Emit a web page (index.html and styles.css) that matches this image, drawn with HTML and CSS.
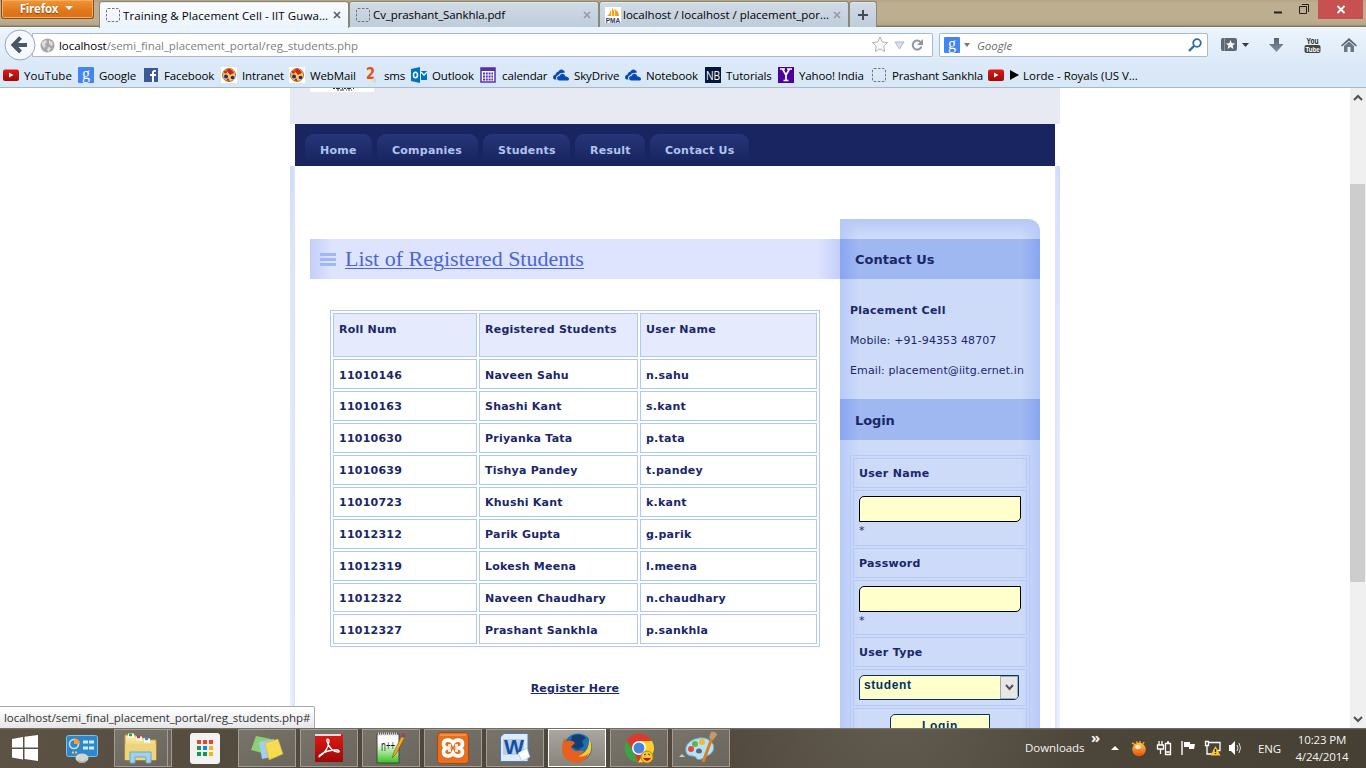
FILE: index.html
```html
<!DOCTYPE html>
<html lang="en">
<head>
<meta charset="utf-8">
<title>Training &amp; Placement Cell - IIT Guwahati</title>
<link rel="stylesheet" href="styles.css">
</head>
<body>
<svg class="defs" width="0" height="0">
  <defs>
    <linearGradient id="red" x2="0" y2="1"><stop stop-color="#e01a14"/><stop offset="1" stop-color="#9c0a08"/></linearGradient>
    <linearGradient id="steel" x2="0" y2="1"><stop stop-color="#57626e"/><stop offset="1" stop-color="#8592a0"/></linearGradient>
    <linearGradient id="fold" x2="0" y2="1"><stop stop-color="#fbeaa9"/><stop offset="1" stop-color="#e3bf55"/></linearGradient>
    <linearGradient id="npp" x2="0" y2="1"><stop offset=".3" stop-color="#fff"/><stop offset="1" stop-color="#38c41c"/></linearGradient>
    <linearGradient id="sun" x2="0" y2="1"><stop stop-color="#ffc94a"/><stop offset="1" stop-color="#e84c0a"/></linearGradient>
    <symbol id="yt" viewBox="0 0 16 16"><rect y="2.5" width="16" height="11.5" rx="2" fill="url(#red)"/><path d="M6 5.5v5l4.500-2.500z" fill="#fff"/></symbol>
    <symbol id="g" viewBox="0 0 16 16"><rect width="16" height="16" rx="1" fill="#4285f4"/><text x="8" y="11.500" text-anchor="middle" font-family="Liberation Serif, serif" font-size="16" fill="#fff">g</text></symbol>
    <symbol id="blank" viewBox="0 0 16 16"><rect x="1.500" y="1.500" width="13" height="13" rx="1.500" fill="none" stroke="#70767c" stroke-dasharray="2.500 1.500"/></symbol>
    <symbol id="iit" viewBox="0 0 16 16"><path fill="#fff" d="M0 0h16v16H0z"/><circle cx="8" cy="8" r="6.500" fill="#f3cf55" stroke="#a87530"/><path d="M5 3q5-3 8 3l-4 2z" fill="#d22219"/><circle cx="5" cy="9.500" r="2" fill="#21269b"/><circle cx="11.500" cy="10.500" r="1.800" fill="#21269b"/><circle cx="4.500" cy="5" r="1.500" fill="#d22219"/><path d="M7 11l2 3-4-.5z" fill="#d22219"/></symbol>
    <symbol id="cloud" viewBox="0 0 16 16"><path fill="#094ab2" d="M1.500 12.500Q0 12 0 10t2.500-2.500Q3 5 5.500 4.500 7 1.500 10 3q1.500.5 2 2.500L9 6Q7 5.500 5.500 8 3 8.500 3 11q0 1 .5 1.500z"/><path fill="#094ab2" d="M6 13.500q-2-.5-2-2.500t2.500-2Q8 6 10.500 7q1.500.5 2 2.500 3.500.5 3.500 2.500 0 1-1 1.500z"/></symbol>
  </defs>
</svg>
<div class="screen">
  <header class="chrome">
    <div class="titlebar">
      <button class="ffbtn">Firefox <i class="tri"></i></button>
      <div class="tabs">
        <div class="tab on"><svg class="i16"><use href="#blank"/></svg><span class="t1">Training &amp; Placement Cell - IIT Guwa...</span><svg class="x" width="8" height="8"><path d="M1 1l6 6m0-6l-6 6"/></svg></div>
        <div class="tab"><svg class="i16"><use href="#blank"/></svg><span class="t2">Cv_prashant_Sankhla.pdf</span><svg class="x" width="8" height="8"><path d="M1 1l6 6m0-6l-6 6"/></svg></div>
        <div class="tab"><svg class="i16" viewBox="0 0 16 16"><path fill="#fff" d="M0 0h16v16H0z"/><path d="M2 9Q6 6 6 1v8zM7 9V1q3 3 2 8zM10 9q1-4-1-7 5 2 5 7z" fill="#f89c0e"/><text x="8" y="15.500" text-anchor="middle" font-family="Liberation Sans, sans-serif" font-weight="bold" font-size="6.500" fill="#333366">PMA</text></svg><span class="t3">localhost / localhost / placement_por...</span><svg class="x" width="8" height="8"><path d="M1 1l6 6m0-6l-6 6"/></svg></div>
        <div class="tab plus"><svg width="12" height="12"><path d="M6 1v10M1 6h10" stroke="#444b52" stroke-width="2"/></svg></div>
      </div>
      <div class="wctl">
        <svg width="112" height="19"><path d="M16 12.500h8" stroke="#222" stroke-width="2"/><path d="M41.500 6.500h7v7h-7zM44 4.500h6.500V12" fill="none" stroke="#222"/><path fill="#c75050" d="M60 0h45v19H60z"/><path d="M79.500 6l7 7m0-7l-7 7" stroke="#fff" stroke-width="1.800"/></svg>
      </div>
    </div>
    <div class="toolbar">
      <div class="back"><svg width="32" height="32"><circle cx="16" cy="16" r="15" fill="#f5f9fd" stroke="#96a7b8"/><path d="M16.500 8.500L9.500 16l7 7M10 16h13" fill="none" stroke="#4a5663" stroke-width="4"/></svg></div>
      <div class="url">
        <svg class="globe" width="15" height="15" viewBox="0 0 15 15"><circle cx="7.500" cy="7.500" r="7" fill="#a7a7a7"/><path d="M2 4l4-2 1 2-2 2 1 2-2 2-2-3zM9 2l4 3-1 3-2-1-1-2zM8 9l3 1-2 4-2-2z" fill="#dedede"/></svg>
        <span class="addr">localhost<em>/semi_final_placement_portal/reg_students.php</em></span>
        <svg width="58" height="20" class="urlend"><path d="M9 2l2.300 5 5.200.600-3.800 3.600 1 5.300L9 13.900l-4.700 2.600 1-5.300L1.500 7.600 6.700 7z" fill="#fafafa" stroke="#adb1b5"/><path d="M24 7h9l-4.500 7z" fill="#d9e0e8" stroke="#a5afba" stroke-width=".8"/><path d="M49.500 7A4.500 4.500 0 1 0 50.500 11.500" fill="none" stroke="#8a98a6" stroke-width="2"/><path d="M52 4v6h-6z" fill="#8a98a6"/></svg>
      </div>
      <div class="search"><svg class="i16"><use href="#g"/></svg><i class="tri dk"></i><em class="sg">Google</em><svg width="14" height="14" class="mag"><circle cx="9" cy="5" r="3.800" fill="none" stroke="#2e6da8" stroke-width="1.800"/><path d="M6 8l-5 5" stroke="#2e6da8" stroke-width="2.400"/></svg></div>
      <div class="tools">
        <svg width="28" height="18"><rect y="2" width="16" height="13" rx="2" fill="#5d6874"/><path d="M3.500 2v13" stroke="#8d98a3"/><path d="M9.500 4l1.300 3.200 3.400.2-2.600 2.200.8 3.400-2.900-1.900-2.900 1.900.8-3.400-2.600-2.200 3.400-.2z" fill="#fff"/><path d="M21 7h7l-3.500 4z" fill="#333b43"/></svg>
        <svg width="15" height="18"><path d="M5 2h5v6h4.500l-7 8L0 8h5z" fill="url(#steel)"/></svg>
        <svg width="17" height="18"><text x="2.500" y="7.500" font-family="Liberation Sans, sans-serif" font-weight="bold" font-size="8.500" textLength="12" lengthAdjust="spacingAndGlyphs" fill="#222">You</text><rect x=".5" y="9" width="16" height="8" rx="2" fill="#444"/><text x="1.500" y="16" font-family="Liberation Sans, sans-serif" font-weight="bold" font-size="8" textLength="14" lengthAdjust="spacingAndGlyphs" fill="#fff">Tube</text></svg>
        <svg width="16" height="18"><path d="M0 9.500L8 2l8 7.500-1 1L8 4.500l-7 6z" fill="#55606c"/><path d="M3 10l5-4.500L13 10v6H9.500v-5h-3v5H3z" fill="#6c7884"/></svg>
      </div>
    </div>
    <nav class="marks">
      <a class="m1"><svg class="i16"><use href="#yt"/></svg><span>YouTube</span></a>
      <a class="m2"><svg class="i16"><use href="#g"/></svg><span>Google</span></a>
      <a class="m3"><svg class="i16 low" viewBox="0 0 16 16"><path fill="#3b5998" d="M0 1h14v14H0z"/><path d="M10 15V9h2V7h-2V5.500q0-1 2-.8V3Q8 2.500 8 5.500V7H6v2h2v6z" fill="#fff"/></svg><span>Facebook</span></a>
      <a class="m4"><svg class="i16"><use href="#iit"/></svg><span>Intranet</span></a>
      <a class="m5"><svg class="i16"><use href="#iit"/></svg><span>WebMail</span></a>
      <a class="m6"><svg class="i16" viewBox="0 0 16 16"><text x="1" y="12" font-family="DejaVu Sans, sans-serif" font-weight="bold" font-size="15" textLength="9" lengthAdjust="spacingAndGlyphs" fill="#e8500f">2</text><path d="M7 12q4-3 4 1t-3 2z" fill="#d5d8da"/></svg><span>sms</span></a>
      <a class="m7"><svg class="i16" viewBox="0 0 16 16"><path fill="#0072c6" d="M0 2l9-2v16l-9-2zM10 4h6v9h-6z"/><path d="M10 5l3 3 3-3" fill="none" stroke="#fff" stroke-width="1.300"/><ellipse cx="4.500" cy="8" rx="2" ry="2.800" fill="none" stroke="#fff" stroke-width="1.500"/></svg><span>Outlook</span></a>
      <a class="m8"><svg class="i16" viewBox="0 0 16 16"><path d="M1 1h14v14H1z" fill="#fff" stroke="#5133ab" stroke-width="1.500"/><path d="M1 1h14v3H1z" fill="#5133ab"/><path d="M3 6.500h10M3 9.500h10M3 12.500h10" stroke="#5133ab" stroke-width="2" stroke-dasharray="2 .8"/></svg><span>calendar</span></a>
      <a class="m9"><svg class="i16"><use href="#cloud"/></svg><span>SkyDrive</span></a>
      <a class="m10"><svg class="i16"><use href="#cloud"/></svg><span>Notebook</span></a>
      <a class="m11"><svg class="i16" viewBox="0 0 16 16"><path fill="#04173a" d="M0 0h16v16H0z"/><text x="1" y="12.500" font-family="Open Sans, sans-serif" font-size="12.500" textLength="14" lengthAdjust="spacingAndGlyphs" fill="#fff">NB</text></svg><span>Tutorials</span></a>
      <a class="m12"><svg class="i16" viewBox="0 0 16 16"><path fill="#4d00a0" d="M0 0h16v16H0z"/><path d="M2 2h5M9 2h5M4.500 2L8 8v5l0-5 3.500-6M5.500 13.500h5" fill="none" stroke="#fff" stroke-width="1.700"/></svg><span>Yahoo! India</span></a>
      <a class="m13"><svg class="i16"><use href="#blank"/></svg><span>Prashant Sankhla</span></a>
      <a class="m14"><svg class="i16"><use href="#yt"/></svg><i class="play"></i><span>Lorde - Royals (US V...</span></a>
    </nav>
  </header>

  <div class="view">
    <main class="page">
      <div class="top"><div class="logo"><svg width="30" height="3"><path d="M3 .5h22M7 2h15" stroke="#333" stroke-dasharray="2 1 4 2 1 1"/></svg></div></div>
      <nav class="menu"><a class="n1">Home</a><a class="n2">Companies</a><a class="n3">Students</a><a class="n4">Result</a><a class="n5">Contact Us</a></nav>
      <div class="body">
        <section class="content">
          <div class="heading"><i class="bars"></i><h1>List of Registered Students</h1></div>
          <div class="grid">
            <b>Roll Num</b><b>Registered Students</b><b>User Name</b>
            <span class="lo">11010146</span><span class="lo">Naveen Sahu</span><span class="lo">n.sahu</span>
            <span>11010163</span><span>Shashi Kant</span><span>s.kant</span>
            <span>11010630</span><span>Priyanka Tata</span><span>p.tata</span>
            <span>11010639</span><span>Tishya Pandey</span><span>t.pandey</span>
            <span>11010723</span><span>Khushi Kant</span><span>k.kant</span>
            <span>11012312</span><span>Parik Gupta</span><span>g.parik</span>
            <span>11012319</span><span>Lokesh Meena</span><span>l.meena</span>
            <span>11012322</span><span>Naveen Chaudhary</span><span>n.chaudhary</span>
            <span class="lo">11012327</span><span class="lo">Prashant Sankhla</span><span class="lo">p.sankhla</span>
          </div>
          <div class="reg"><a>Register Here</a></div>
        </section>
        <aside class="side">
          <h2>Contact Us</h2>
          <div class="contact"><p><b>Placement Cell</b></p><p>Mobile: +91-94353 48707</p><p>Email: placement@iitg.ernet.in</p></div>
          <h2 class="h41">Login</h2>
          <div class="form">
            <div class="lab">User Name</div>
            <div class="fld"><div class="inp"></div>*</div>
            <div class="lab">Password</div>
            <div class="fld"><div class="inp"></div>*</div>
            <div class="lab">User Type</div>
            <div class="selrow"><div class="sel"><span>student</span><i><svg width="9" height="7"><path d="M1 1l3.500 4L8 1" fill="none" stroke="#555" stroke-width="2"/></svg></i></div></div>
            <div class="btnrow"><div class="btn">Login</div></div>
          </div>
        </aside>
      </div>
    </main>
    <div class="scroll"><svg width="16" height="16"><path d="M4 10l4-4 4 4" fill="none" stroke="#505050" stroke-width="2"/></svg><div class="thumb"></div><svg width="16" height="16"><path d="M4 6l4 4 4-4" fill="none" stroke="#505050" stroke-width="2"/></svg></div>
    <div class="status"><span>localhost/semi_final_placement_portal/reg_students.php#</span></div>
  </div>

  <footer class="task">
    <div class="slot s1"><svg width="26" height="26"><path d="M0 4l11-2v10.500H0zM12.500 1.800L26 0v12.500H12.500zM0 14h11v10.500l-11-2zM12.500 14H26v12l-13.500-2z" fill="#fff"/></svg></div>
    <div class="slot s2"><svg width="32" height="32"><rect x=".5" y="3.500" width="31" height="21" rx="2" fill="#2f86ca" stroke="#7cc0ec"/><circle cx="8" cy="12" r="4.500" fill="none" stroke="#c9e8fb" stroke-width="1.600"/><path d="M8 12V6q6 1 6 6z" fill="#ff9b30"/><path d="M17 10h5m1 0h5M17 16h5m1 0h5" stroke="#cbeeff" stroke-width="3"/><path d="M6 20.500h6" stroke="#ffc34d" stroke-width="2" stroke-dasharray="2 1"/><ellipse cx="16" cy="26" rx="6.500" ry="4.500" fill="#d4d4d2"/><path d="M12 27q4 5 8 0l-1 4h-6z" fill="#aaa"/></svg></div>
    <div class="slot bt s3"><svg width="34" height="32"><path d="M1 3h10l2 3h8l2 2h9v20H1z" fill="url(#fold)" stroke="#c69c37"/><path d="M4 3.500h6M12 6.500h6M20 8.500h6" stroke="#fff" stroke-width="4"/><path d="M5 3h3" stroke="#1bb02a" stroke-width="2.500"/><path d="M13 5h3" stroke="#d3392a" stroke-width="2.500"/><path d="M21 7h3" stroke="#2590dd" stroke-width="2.500"/><path d="M1 12h31v16H1z" fill="#efd47b"/><path d="M6 31V20h21v11h-5v-6H11v6z" fill="#9fd3ed" stroke="#6ba7c7"/></svg></div><div class="stack"></div>
    <div class="slot s4"><svg width="30" height="31"><rect width="30" height="31" rx="3" fill="#f2f2f2"/><g><path d="M7 7h4v4H7zm6 0h4v4h-4zm6 0h4v4h-4z" fill="#ea4335"/><path d="M7 13h4v4H7zM7 19h4v4H7zM13 19h4v4h-4z" fill="#0b9d58"/><path d="M13 13h4v4h-4z" fill="#1a84ee"/><path d="M19 13h4v4h-4zm0 6h4v4h-4z" fill="#fbb409"/></g></svg></div>
    <div class="slot bt s5"><svg width="34" height="28"><path d="M6 2l15 3-5 15L1 16z" fill="#8dcf73"/><path d="M9 8l15-3 3 17-15 3z" fill="#a0cef5"/><path d="M15 9l13-4 5 15-14 6z" fill="#f5dc50" stroke="#d1ae2d" stroke-width=".5"/></svg></div>
    <div class="slot bt s6"><svg width="30" height="30"><rect x="1" y="1" width="28" height="28" rx="1" fill="url(#red)"/><path d="M1 1h26v2H1z" fill="#ddd"/><path d="M6 23q8-5 9-15c0-3-3-2-2 0 2 8 7 11 11 11 2 0 1-2-1-2q-11 0-17 5-2 3 0 1" fill="none" stroke="#fff" stroke-width="1.400"/></svg></div>
    <div class="slot bt s7"><svg width="32" height="32"><path d="M2 2h22v29H2z" fill="url(#npp)" stroke="#444"/><path d="M3 2h20" stroke="#ccc" stroke-width="3" stroke-dasharray="1 1"/><text x="6" y="19" font-family="Open Sans, sans-serif" font-size="14" textLength="14" lengthAdjust="spacingAndGlyphs" fill="#111">n++</text><path d="M17 26l2-6L27 3l3 2-9 17z" fill="#f0aa28" stroke="#754c10" stroke-width=".6"/><path d="M26 5l1.500-4 3 1.500L29 6z" fill="#9c4550"/></svg></div>
    <div class="slot bt s8"><svg width="32" height="32"><rect x=".5" y=".5" width="31" height="31" rx="3" fill="#e86f1e" stroke="#a9480e"/><path d="M3 3h26" stroke="#f5b183"/><path d="M14 13.500h-3M14 18.500h-3M18 13.500h3M18 18.500h3" stroke="#fff" stroke-width="2.500"/><path d="M16 11C14 7 6.500 7 6.500 12q0 3 3 4-3 1-3 4c0 5 7.500 5 9.500 1 2 4 9.500 4 9.500-1q0-3-3-4 3-1 3-4c0-5-7.500-5-9.500-1z" fill="none" stroke="#fff" stroke-width="3.600"/></svg></div>
    <div class="slot bt s9"><svg width="30" height="30"><path d="M4 .5h24v28H.5V4z" fill="#dfebf7" stroke="#487cbe"/><path d="M3 6h21v16H3z" fill="#b6cfeb"/><text x="4" y="21" font-family="Liberation Sans, sans-serif" font-weight="bold" font-size="21" textLength="20" lengthAdjust="spacingAndGlyphs" fill="#164e9e">W</text><path d="M18 20l9-5 3 9-8 4z" fill="#fff" stroke="#9bb7d9" stroke-width=".6"/></svg></div>
    <div class="slot bt act s10"><svg width="32" height="32"><circle cx="17" cy="15.500" r="14" fill="#1c6fb2"/><path d="M11 4q8-4 14 2l-4 3 2 5-6 4-8-4z" fill="#123e78"/><path d="M28 6q6 12-3 20T6 27L20 23q9-5 8-17z" fill="#ffc829"/><path d="M4 5q0 5 3 4 5-1 7 2l-4 4q2 5 8 4 3-1 5 0-3 6-9 4 8 4 14-2-4 10-13 10Q1 29 1 16 1 10 4 5z" fill="#e8601b"/></svg></div>
    <div class="slot bt s11"><svg width="30" height="32"><circle cx="15" cy="16" r="14.500" fill="#dc3a2d"/><path d="M2.500 8.500L10 20l4 10.500A14.500 14.500 0 0 1 2.500 8.500z" fill="#3ba347"/><path d="M15 9h13a14.500 14.500 0 0 1-14 21.500l8-13z" fill="#fdd32a"/><circle cx="15" cy="16" r="7" fill="#fff"/><circle cx="15" cy="16" r="5.500" fill="#4587d6"/><circle cx="23" cy="25" r="6" fill="#f5c52c" stroke="#bc850f"/><path d="M19 26h8q-4 6-8 0" fill="#a01b1b"/><path d="M20 23l2-1m2 0l2 1" stroke="#533"/></svg></div>
    <div class="slot bt s12"><svg width="38" height="34"><path d="M-3 26l3-3 3 3z" fill="#ccc"/><g transform="translate(-3 0)"><path d="M7 21Q5 12 16 8q12-4 18 5 3 8-6 12-7 5-10 3-1-3-5-3-5 0-6-4z" fill="#b9e1f5" stroke="#6fabd0"/><ellipse cx="20" cy="20" rx="3" ry="2.500" fill="#5d6a71"/><circle cx="12" cy="18" r="3" fill="#e54838"/><circle cx="16" cy="13" r="3" fill="#5cb945"/><circle cx="23" cy="11" r="3" fill="#f4b92c"/><path d="M24 31L33 7" stroke="#d57f26" stroke-width="3"/><path d="M30 7l2-6q5-1 6 3l-4 5z" fill="#c49a6c"/></g></svg></div>
    <div class="tray">
      <span class="dl">Downloads</span><b class="chev">»</b>
      <i class="up"></i>
      <svg class="sun" width="16" height="17"><circle cx="8" cy="9.500" r="6.800" fill="url(#sun)"/><path d="M1 3l3 1.500m1-3l2 1.500m2-2v2m4-1l-1 2" stroke="#ffa51d" stroke-width="1.500"/><ellipse cx="7" cy="7" rx="3" ry="2" fill="#fff" opacity=".7"/></svg>
      <svg class="bat" width="16" height="16"><path d="M3 1v4M6 1v4M1.500 5h6v4h-6zM4.500 9v5" fill="none" stroke="#fff" stroke-width="1.300"/><path d="M9.500 3.500h5v11h-5zM11 2h2M10 12h4" fill="none" stroke="#fff" stroke-width="1.300"/></svg>
      <svg class="flag" width="16" height="16"><path d="M2 1v14" stroke="#fff" stroke-width="1.400"/><path d="M4 2h6v2h5l-1 5H9V7H4z" fill="#fff"/></svg>
      <svg class="net" width="17" height="16"><path d="M5 2.500h11v8H9M1.500 1.500h3v4h-3zM3 6v8h5" fill="none" stroke="#fff" stroke-width="1.300"/><path d="M11.500 6l5 9.500h-10z" fill="#ffc32b"/><path d="M11.500 9v3m0 1v1" stroke="#222" stroke-width="1.300"/></svg>
      <svg class="vol" width="16" height="16"><path d="M1 5h2l4-4v14l-4-4H1z" fill="#fff"/><path d="M9 5q2 3 0 6m2-8q3 5 0 10" fill="none" stroke="#ddd"/></svg>
      <span class="eng">ENG</span>
      <div class="clock"><span>10:23 PM</span><span>4/24/2014</span></div>
    </div>
  </footer>
</div>
</body>
</html>
```
FILE: styles.css
```css
* { box-sizing: border-box; }
body { margin: 0; background: #fff; overflow: hidden; }
svg { display: block; flex: none; overflow: visible; }
.defs { position: absolute; }
.i16 { width: 16px; height: 16px; }
.screen { width: 1366px; height: 768px; display: flex; flex-direction: column; overflow: hidden; font: 11.5px "Open Sans", "Noto Sans", sans-serif; color: #000; white-space: nowrap; }

/* browser window */
.titlebar { height: 27px; display: flex; align-items: flex-start; background: linear-gradient(#b4a483 0, #beae90 3px, #beae90 20px, #b5a587 25px, #827963 26px); }
.ffbtn { width: 93px; height: 19px; margin: 0 6px 0 1px; padding: 0 2px 2px 0; display: flex; align-items: center; justify-content: center; gap: 7px; border: 1px solid #8e4d14; border-top: 0; border-radius: 0 0 3px 3px; background: linear-gradient(#f29637, #e0771c 60%, #d96f17); font: bold 11.5px "Open Sans", sans-serif; letter-spacing: -.2px; color: #fff; text-shadow: 0 1px 1px #8a4209; box-shadow: inset 0 0 0 1px #f5ae62; }
.tri { border: 4px solid transparent; border-top-color: #fff; border-bottom: 0; }
.tri.dk { border-width: 3px; border-top: 4px solid #777; border-bottom: 0; }
.tabs { display: flex; }
.tab { width: 250px; height: 26px; margin-top: 1px; padding: 0 7px 0 5px; display: flex; align-items: center; gap: 2px; background: linear-gradient(#d0dbe6, #bfccd9); border: 1px solid #8a8678; border-bottom: 0; border-radius: 3px 3px 0 0; box-shadow: inset 0 1px #e2e9ef; }
.tab.on { height: 27px; background: linear-gradient(#fbfdff, #eaf3fc); margin-left: -1px; width: 250px; }
.tab.plus { width: 28px; padding: 1px 7px; }
.tab .x { margin-left: auto; stroke: #949a9f; stroke-width: 1.6; }
.tab.on .x { stroke: #5b5b5b; }
.t1 { letter-spacing: .08px; }
.t2 { letter-spacing: -.1px; }
.t3 { letter-spacing: 0; }
.wctl { margin-left: auto; width: 107px; margin-right: 1px; }
.toolbar { height: 36px; display: flex; align-items: center; background: linear-gradient(#edf5fd, #dce9f7); }
.back { width: 32px; height: 32px; margin: 0 0 0 4px; z-index: 1; flex: none; }
.url { width: 901px; height: 24px; flex: none; margin: 0 0 0 -4px; padding: 0 3px 0 7px; display: flex; align-items: center; background: #fff; border: 1px solid #a9bacb; border-radius: 0 2px 2px 0; }
.addr { margin-left: 4px; letter-spacing: -.06px; }
.addr em { font-style: normal; color: #808080; }
.urlend { margin-left: auto; }
.search { width: 269px; height: 24px; flex: none; margin-left: 6px; padding: 0 5px 0 4px; display: flex; align-items: center; background: #fff; border: 1px solid #a9bacb; border-radius: 2px; }
.search .tri { margin-left: 4px; }
.sg { margin-left: 7px; color: #6d6d6d; letter-spacing: -.03px; }
.mag { margin-left: auto; }
.tools { margin-left: 13px; display: flex; align-items: center; }
.tools svg { margin-right: 20px; }
.marks { height: 25px; display: flex; padding-left: 3px; background: linear-gradient(#dbe9f8, #d8e7f6); border-bottom: 1px solid #a9b9cc; }
.marks a { display: flex; align-items: center; gap: 5px; flex: none; height: 24px; letter-spacing: -.13px; }
.m1 { width: 75px; } .m2 { width: 66px; } .m3 { width: 77px; } .m4 { width: 68px; } .m5 { width: 76px; } .m6 { width: 46px; } .m7 { width: 69px; } .m8 { width: 73px; } .m9 { width: 72px; } .m10 { width: 80px; } .m11 { width: 73px; } .m12 { width: 93px; } .m13 { width: 117px; }
.marks .m1 { letter-spacing: .1px; }
.marks .m3 { gap: 4px; }
.marks .m6 { gap: 3px; }
.marks .m8 { gap: 6px; }
.marks .m14 { letter-spacing: -.02px; }
.play { border: 5px solid transparent; border-left: 9px solid #000; border-right: 0; margin: 0 -1px 0 1px; }

/* viewport */
.view { height: 640px; display: flex; position: relative; overflow: hidden; background: #fff; font: 11px/16px "DejaVu Sans", Verdana, sans-serif; color: #1a2768; }
.page { width: 770px; margin-left: 290px; }
.top { height: 36px; padding-left: 20px; background: #e7eaf3; }
.logo { width: 64px; height: 4px; padding-left: 20px; background: #fff; }
.menu { height: 42px; margin: 0 5px; padding: 10px 10px 0; display: flex; gap: 5px; background: #182561; }
.menu a { height: 32px; padding: 1px 0 0 15px; display: flex; align-items: center; border-radius: 9px 9px 0 0; background: linear-gradient(#27367a, #182561 85%); color: #b1c4ec; font-weight: bold; letter-spacing: .23px; }
.n1 { width: 67px; } .n2 { width: 101px; } .n3 { width: 87px; } .n4 { width: 70px; } .n5 { width: 99px; }
.body { height: 562px; padding-left: 20px; display: flex; background: linear-gradient(90deg, #fff0, #dbe3fd) 0 0 / 5px 100% no-repeat, linear-gradient(#cdd9f9, #dfe7fc 110px, #eef2fe) 0 0 / 5px 100% no-repeat, linear-gradient(270deg, #fff0, #dbe3fd) 100% 0 / 5px 100% no-repeat, linear-gradient(#cdd9f9, #dfe7fc 110px, #f1f4fe) 100% 0 / 5px 100% no-repeat; }
.content { width: 530px; padding-top: 73px; }
.heading { height: 40px; padding-left: 10px; display: flex; align-items: center; background: linear-gradient(90deg, #c3cffa, #dee4fe 22px, #dee4fe 508px, #c3cffa); }
.bars { width: 16px; height: 13px; border: solid #a0b8f2; border-width: 3px 0; background: linear-gradient(transparent 2px, #a0b8f2 2px, #a0b8f2 5px, transparent 5px); }
h1 { margin: 0 0 0 9px; font: 22px/28px "Liberation Serif", Georgia, serif; color: #4b66d4; text-decoration: underline; text-underline-offset: 2px; text-decoration-thickness: 1px; }
.grid { width: 490px; height: 337px; margin: 31px 0 0 20px; padding: 2px; border: 1px solid #b3c7f5; display: grid; grid-template-columns: 144px 159px 177px; grid-template-rows: 44px repeat(7, 30px) 29px 30px; gap: 2px; font-weight: bold; letter-spacing: .23px; }
.grid > * { border: 1px solid #b3c7f5; padding: 7px 5px; }
.grid > b { background: #e5ebfc; padding-top: 8px; }
.grid > .lo { padding-top: 8px; }
.reg { margin-top: 34px; text-align: center; font-weight: bold; letter-spacing: .23px; }
.reg a { text-decoration: underline; text-underline-offset: 1px; }
.side { width: 200px; height: 600px; margin-top: 53px; padding-top: 20px; border-radius: 0 12px 0 0; overflow: hidden; background: linear-gradient(#b5c8f6, #b5c8f600 17px), linear-gradient(90deg, #b7caf7, #cddbf9 19px, #cddbf9 181px, #b7caf7); }
h2 { margin: 0; height: 40px; padding-left: 15px; font: bold 13px/42px "DejaVu Sans", Verdana, sans-serif; background: linear-gradient(90deg, #88a5ef, #a0b8f2 19px, #a0b8f2 181px, #88a5ef); }
.h41 { height: 41px; line-height: 44px; letter-spacing: -.1px; }
.contact { height: 120px; padding: 24px 0 0 10px; letter-spacing: .11px; }
.contact b { letter-spacing: .25px; }
.contact p { margin: 0 0 14px; }
.form { width: 180px; margin: 15px 0 0 10px; padding: 2px; display: grid; gap: 2px; grid-template-rows: 30px 56px 30px 55px 30px 37px 60px; border: 1px solid #b7c9f5; }
.form > div { border: 1px solid #b7c9f5; padding: 7px 5px; }
.form .lab { font-weight: bold; letter-spacing: .3px; }
.form .fld { padding-top: 5px; line-height: 18px; }
.inp { width: 162px; height: 26px; background: #ffffcb; border: 1px solid #000; border-radius: 5px 0; }
.form .selrow { padding-top: 5px; }
.sel { width: 160px; height: 25px; display: flex; background: #ffffcb; border: 1px solid #003366; border-radius: 5px 0; overflow: hidden; font: bold 12px/19px "Liberation Sans", Arial, sans-serif; color: #003366; padding-left: 4px; letter-spacing: .6px; }
.sel i { margin-left: auto; width: 18px; display: grid; place-items: center; background: #e7e7e7; border: 1px solid #a9a9a9; }
.form .btnrow { padding-top: 5px; }
.btn { width: 100px; height: 26px; margin: 0 0 0 31px; background: #ffffcb; border: 1px solid #003366; border-radius: 5px 0; text-align: center; font: bold 12px/23px "Liberation Sans", Arial, sans-serif; letter-spacing: .7px; color: #003366; }
.scroll { width: 16px; margin-left: auto; padding: 2px 0 1px; background: #f0f0f0; display: flex; flex-direction: column; }
.thumb { height: 398px; margin: 78px 1px auto 0; background: #cdcdcd; }
.status { position: absolute; left: 0; bottom: 0; width: 315px; height: 22px; padding-left: 4px; background: linear-gradient(#fff, #e7e7ea); border: 1px solid #a9a9a9; border-left: 0; border-bottom: 0; border-radius: 0 2px 0 0; font: 11.5px/21px "Open Sans", sans-serif; color: #333; letter-spacing: -.06px; }

/* taskbar */
.task { height: 40px; display: flex; align-items: center; background: linear-gradient(#7c766c, transparent 2px), radial-gradient(circle at 900px -20px, #625b50, transparent 180px), linear-gradient(100deg, #5c5345, #4e463a 30%, #534b40 60%, #453f34); }
.slot { height: 38px; display: grid; place-items: center; flex: none; }
.bt { width: 58px; margin-right: 4px; background: linear-gradient(150deg, #79746a, #6b665d); border: 1px solid #a19d94; }
.act { background: linear-gradient(#aaa7a0, #88847c); border-color: #fff; }
.s1 { width: 50px; } .s2 { width: 64px; } .s3 { width: 54px; margin: 0; } .s4 { width: 66px; }
.stack { width: 4px; height: 38px; border: 1px solid #a19d94; border-left: 0; background: #6b665d; }
.tray { flex: 1; height: 40px; display: flex; align-items: center; color: #f4f4f2; }
.dl { width: 66px; margin: 0 0 1px 291px; letter-spacing: -.05px; flex: none; }
.chev { width: 20px; font: bold 15px/12px "Open Sans", sans-serif; margin-bottom: 22px; }
.up { border: 4px solid transparent; border-bottom: 4px solid #fff; border-top: 0; }
.sun { margin-left: 12px; } .bat { margin-left: 9px; } .flag { margin-left: 8px; } .net { margin-left: 8px; } .vol { margin-left: 7px; }
.eng { width: 37px; margin-left: 14px; letter-spacing: -.1px; }
.clock { width: 54px; display: flex; flex-direction: column; align-items: center; line-height: 17px; letter-spacing: -.15px; }
```
